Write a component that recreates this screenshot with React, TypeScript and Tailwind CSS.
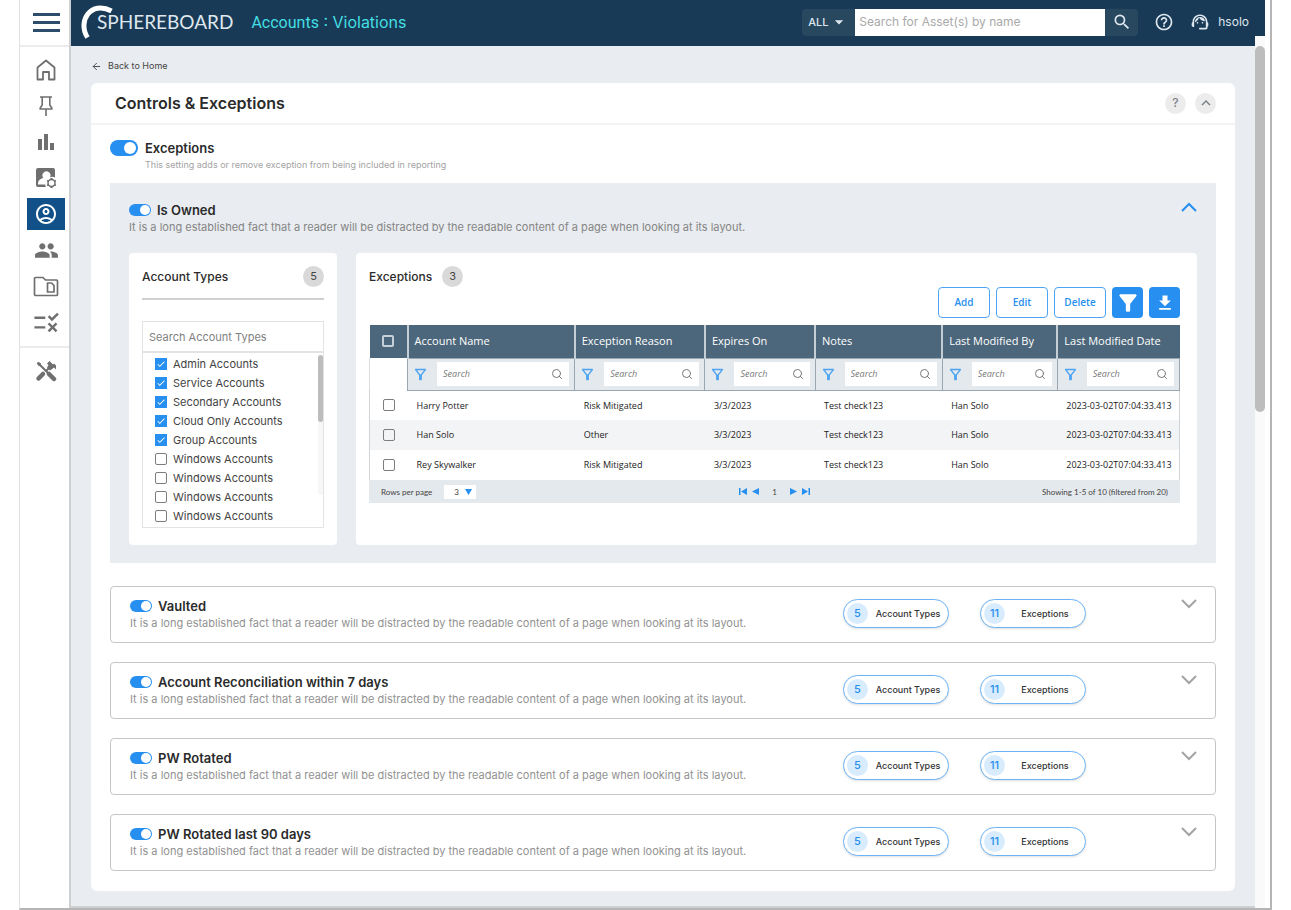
// src/App.tsx
import type { ReactNode } from 'react';
import { ArrowLeft, Search } from 'lucide-react';
import {
  MdArrowDropDown,
  MdCheck,
  MdExpandLess,
  MdFileDownload,
  MdFilterAlt,
  MdHelpOutline,
  MdOutlineAccountCircle,
  MdOutlineFilterAlt,
  MdPeople,
  MdRule,
  MdSearch,
  MdSupportAgent,
} from 'react-icons/md';

const DESCRIPTION =
  'It is a long established fact that a reader will be distracted by the readable content of a page when looking at its layout.';

const accountTypes = [
  { name: 'Admin Accounts', checked: true },
  { name: 'Service Accounts', checked: true },
  { name: 'Secondary Accounts', checked: true },
  { name: 'Cloud Only Accounts', checked: true },
  { name: 'Group Accounts', checked: true },
  { name: 'Windows Accounts', checked: false },
  { name: 'Windows Accounts', checked: false },
  { name: 'Windows Accounts', checked: false },
  { name: 'Windows Accounts', checked: false },
];

const columns = [
  { title: 'Account Name', width: 'w-[167px]' },
  { title: 'Exception Reason', width: 'w-[130px]' },
  { title: 'Expires On', width: 'w-[110px]' },
  { title: 'Notes', width: 'w-[127px]' },
  { title: 'Last Modified By', width: 'w-[115px]' },
  { title: 'Last Modified Date', width: 'w-[122px]' },
];

const rows = [
  ['Harry Potter', 'Risk Mitigated', '3/3/2023', 'Test check123', 'Han Solo', '2023-03-02T07:04:33.413'],
  ['Han Solo', 'Other', '3/3/2023', 'Test check123', 'Han Solo', '2023-03-02T07:04:33.413'],
  ['Rey Skywalker', 'Risk Mitigated', '3/3/2023', 'Test check123', 'Han Solo', '2023-03-02T07:04:33.413'],
];

const controls = ['Vaulted', 'Account Reconciliation within 7 days', 'PW Rotated', 'PW Rotated last 90 days'];

const HomeIcon = () => (
  <svg width="20" height="22" viewBox="0 0 20 22" fill="none" stroke="currentColor" strokeWidth="1.8" strokeLinejoin="round">
    <path d="M1.500 8.500 10 1.500l8.500 7V20.500H13v-7.500H7v7.500H1.500z" />
  </svg>
);

const PinIcon = () => (
  <svg width="16" height="22" viewBox="0 0 16 22" fill="none" stroke="currentColor" strokeWidth="1.6">
    <path d="M2 2h12M4.200 2v8L2.200 13v1h11.600v-1l-2-3V2M8 14v7" />
  </svg>
);

const BarsIcon = () => (
  <svg width="18" height="18" viewBox="0 0 18 18" fill="currentColor">
    <path d="M1 6h4v11H1zM7 1h4v16H7zM13 10h4v7h-4z" />
  </svg>
);

const AccountSettingsIcon = () => (
  <svg width="22" height="22" viewBox="0 0 22 22" fill="none">
    <path
      d="M3 1h15a2 2 0 0 1 2 2v7.500a5.500 5.500 0 0 0-5-.2 4 4 0 1 0-6.800.4C5.500 11.800 3 13.300 3 16v1.500h7.200c0 1 .3 1.800.8 2.500H3a2 2 0 0 1-2-2V3a2 2 0 0 1 2-2z"
      fill="currentColor"
    />
    <path d="M16.500 11v10M12.200 13.500l8.600 5M20.800 13.500l-8.600 5" stroke="currentColor" strokeWidth="2" />
    <circle cx="16.500" cy="16" r="3.500" fill="white" stroke="currentColor" strokeWidth="1.500" />
  </svg>
);

const FolderIcon = () => (
  <svg width="26" height="21" viewBox="0 0 26 21" fill="none" stroke="currentColor" strokeWidth="1.700" strokeLinejoin="round">
    <path d="M2.500 1.500H10l2.500 2.500h11a1 1 0 0 1 1 1v13.500a1 1 0 0 1-1 1h-21a1 1 0 0 1-1-1v-16a1 1 0 0 1 1-1z" />
    <path d="M14.500 7h4l2.500 2.500V16h-6.500z" />
  </svg>
);

// Screwdriver crossed with a hammer
const ToolsIcon = () => (
  <svg width="22" height="22" viewBox="0 0 22 22" fill="none" stroke="currentColor">
    <path d="M2.500 2.500l2 2M4 4l9.500 9.500" strokeWidth="2" />
    <path d="M2 3.500 3.500 2 6 3.500V5H6L3.500 6z" fill="currentColor" stroke="none" />
    <path d="M14 14l5 5" strokeWidth="4.500" strokeLinecap="round" />
    <path d="M10.500 11.500 14 8" strokeWidth="2" />
    <path d="M3.500 18.500 8 14" strokeWidth="4.500" strokeLinecap="round" />
    <path d="M12 3.500 14.500 1l3.500 3.500 1-1L21 5.500v4l-2-2-4 3-3-3 1.500-2.500z" fill="currentColor" stroke="none" />
  </svg>
);

const navLinks = [
  { title: 'Home', icon: <HomeIcon /> },
  { title: 'Pinned', icon: <PinIcon /> },
  { title: 'Reports', icon: <BarsIcon /> },
  { title: 'Account settings', icon: <AccountSettingsIcon /> },
  { title: 'Accounts', icon: <MdOutlineAccountCircle size={24} />, active: true },
  { title: 'Groups', icon: <MdPeople size={25} /> },
  { title: 'Folders', icon: <FolderIcon /> },
  { title: 'Rules', icon: <MdRule size={29} /> },
];

const Sidebar = () => (
  <aside className="flex w-[51px] shrink-0 flex-col border-r-2 border-[#cdcfd3] bg-white text-[#6f6f6f]">
    <div className="flex h-[47px] items-center justify-center border-b-2 border-[#ececec] pl-[3px]">
      <button aria-label="Menu" className="flex flex-col gap-[5px]">
        <span className="h-[3px] w-[27px] bg-[#2b4d6b]" />
        <span className="h-[3px] w-[27px] bg-[#2b4d6b]" />
        <span className="h-[3px] w-[27px] bg-[#2b4d6b]" />
      </button>
    </div>
    <nav className="flex flex-col items-center gap-1 border-b-2 border-[#ececec] pt-[7px] pb-2 pl-[3px]">
      {navLinks.map((link) => (
        <a
          key={link.title}
          href="#"
          aria-label={link.title}
          className={
            link.active
              ? 'flex h-8 w-[38px] items-center justify-center bg-[#115088] text-white'
              : 'flex h-8 w-[38px] items-center justify-center'
          }
        >
          {link.icon}
        </a>
      ))}
    </nav>
    <a href="#" aria-label="Tools" className="flex justify-center pt-3 pl-[3px]">
      <ToolsIcon />
    </a>
  </aside>
);

const Logo = () => (
  <div className="flex items-center">
    <svg width="34" height="36" viewBox="0 0 34 36" fill="none" className="-mr-[17px]">
      <path d="M7.500 33.500C-3 17 11-4 31.500 7" stroke="white" strokeWidth="5" />
    </svg>
    <span className="font-[Lato,sans-serif] text-[19px] text-[#dfe7ee]">SPHEREBOARD</span>
  </div>
);

const Header = () => (
  <header className="flex h-[46px] items-center bg-[#193a56] pr-4 pb-[2px] pl-[9px] text-[#dfe7ee]">
    <Logo />
    <h1 className="ml-[18px] text-base text-[#43dfe3]">
      <span className="font-[Roboto,sans-serif]">Accounts</span> : Violations
    </h1>
    <div className="ml-auto flex h-[27px] items-stretch">
      <div className="grid w-[53px] items-center rounded-l bg-[#27485f]">
        <select
          aria-label="Asset type"
          className="col-start-1 row-start-1 h-full w-full appearance-none pl-[6px] text-[11px] font-medium"
        >
          <option>ALL</option>
        </select>
        <MdArrowDropDown size={20} className="pointer-events-none col-start-1 row-start-1 mr-[6px] justify-self-end" />
      </div>
      <input
        aria-label="Search for assets"
        placeholder="Search for Asset(s) by name"
        className="w-[250px] bg-white px-1 text-xs text-gray-700 placeholder:text-[#a9a9a9]"
      />
      <button aria-label="Search" className="flex w-[33px] items-center justify-center rounded-r bg-[#27485f]">
        <MdSearch size={20} />
      </button>
    </div>
    <button aria-label="Help" className="ml-4">
      <MdHelpOutline size={20} />
    </button>
    <button aria-label="Support" className="ml-4">
      <MdSupportAgent size={20} />
    </button>
    <span className="ml-2 text-xs">hsolo</span>
  </header>
);

const Toggle = ({ id, large }: { id: string; large?: boolean }) => (
  <input
    id={id}
    type="checkbox"
    role="switch"
    defaultChecked
    className={
      large
        ? "flex h-4 w-7 shrink-0 appearance-none items-center justify-end rounded-full bg-[#268ff0] px-[2px] before:size-3 before:rounded-full before:bg-white before:content-['']"
        : "flex h-3 w-[22px] shrink-0 appearance-none items-center justify-end rounded-full bg-[#268ff0] px-px before:size-[10px] before:rounded-full before:bg-white before:content-['']"
    }
  />
);

const CheckBox = ({ id, label, checked, light }: { id: string; label?: string; checked?: boolean; light?: boolean }) => (
  <span className="inline-grid size-3 shrink-0 place-items-center">
    <input
      id={id}
      type="checkbox"
      aria-label={label}
      defaultChecked={checked}
      className={
        light
          ? 'col-start-1 row-start-1 size-3 appearance-none rounded-[2px] border-2 border-[#c6d0d8]'
          : 'col-start-1 row-start-1 size-3 appearance-none rounded-[2px] border border-[#7d7d7d] checked:rounded-none checked:border-[#268ff0] checked:bg-[#268ff0]'
      }
    />
    {checked && <MdCheck size={10} className="pointer-events-none col-start-1 row-start-1 text-white" />}
  </span>
);

const Chevron = ({ up }: { up?: boolean }) => (
  <svg
    width="16"
    height="10"
    viewBox="0 0 16 10"
    fill="none"
    strokeWidth="2"
    className={up ? 'stroke-[#268ff0]' : 'stroke-[#a3a3a3]'}
  >
    <path d={up ? 'M1 9l7-7 7 7' : 'M1 1l7 7 7-7'} />
  </svg>
);

const CountBadge = ({ children }: { children: ReactNode }) => (
  <span className="flex size-[21px] items-center justify-center rounded-full bg-[#d9d9d9] text-[11px] text-[#444]">
    {children}
  </span>
);

const AccountTypes = () => (
  <section className="w-[208px] shrink-0 rounded-sm bg-white px-[13px] pt-[13px] pb-[17px]">
    <div className="flex h-[34px] items-start justify-between border-b-2 border-[#d0d0d0]">
      <h3 className="pt-[3px] text-xs leading-4 font-medium">Account Types</h3>
      <CountBadge>5</CountBadge>
    </div>
    <div className="mt-[21px] border border-[#e3e3e3]">
      <input
        aria-label="Search Account Types"
        placeholder="Search Account Types"
        className="block h-[31px] w-full border-b-2 border-[#e3e3e3] px-[6px] text-[11px] placeholder:text-[#7f7f7f]"
      />
      <div className="flex justify-between">
        <ul className="grid gap-[3px] py-[3px] pl-3">
          {accountTypes.map((type, index) => (
            <li key={index} className="flex h-4 items-center gap-[6px]">
              <CheckBox id={`type-${index}`} checked={type.checked} />
              <label htmlFor={`type-${index}`} className="text-[11px] text-[#444]">
                {type.name}
              </label>
            </li>
          ))}
        </ul>
        <div className="mt-[2px] mb-8 w-[5px] rounded bg-[#f7f7f7]">
          <div className="h-[67px] rounded bg-[#bdbdbd]" />
        </div>
      </div>
    </div>
  </section>
);

const ExceptionsTable = () => (
  <table className="w-full table-fixed border-collapse font-['Open_Sans',sans-serif]">
    <colgroup>
      <col className="w-[38px]" />
      {columns.map((column) => (
        <col key={column.title} className={column.width} />
      ))}
    </colgroup>
    <thead>
      <tr className="h-[33px] bg-[#4c677b] text-left text-[11px] text-white">
        <th className="text-center leading-none">
          <CheckBox id="all-rows" label="Select all" light />
        </th>
        {columns.map((column) => (
          <th key={column.title} className="border-l-2 border-[#c5ced5] pl-[6px] font-medium whitespace-nowrap">
            {column.title}
          </th>
        ))}
      </tr>
      <tr className="h-8">
        <td className="border-l border-[#d9dee2]" />
        {columns.map((column) => (
          <td key={column.title} className="border border-[#9aa7b1] bg-[#e4e9ed]">
            <div className="flex items-center gap-2 pr-[5px] pl-1">
              <MdOutlineFilterAlt size={17} className="shrink-0 text-[#4da4f4]" />
              <label className="flex h-6 min-w-0 flex-1 items-center bg-white px-[6px]">
                <input
                  aria-label={`Search ${column.title}`}
                  placeholder="Search"
                  className="w-0 min-w-0 flex-1 text-[9px] placeholder:text-[#777] placeholder:italic"
                />
                <Search size={12} className="shrink-0 text-[#777]" />
              </label>
            </div>
          </td>
        ))}
      </tr>
    </thead>
    <tbody className="border-x border-[#cfd4d8]">
      {rows.map((row, index) => (
        <tr key={index} className="h-[30px] text-[9px] even:bg-[#f3f4f6]">
          <td className="text-center leading-none">
            <CheckBox id={`row-${index}`} label={`Select ${row[0]}`} />
          </td>
          {row.map((cell, cellIndex) => (
            <td key={cellIndex} className="pl-[9px] whitespace-nowrap text-[#222]">
              {cell}
            </td>
          ))}
        </tr>
      ))}
    </tbody>
  </table>
);

const Pagination = () => (
  <div className="grid h-[23px] grid-cols-3 items-center bg-[#e4e9ed] px-3 font-[Lato,sans-serif] text-[8px] text-[#444]">
    <div className="flex items-center gap-3">
      <label htmlFor="page-size">Rows per page</label>
      <div className="grid w-8 items-center bg-white">
        <select id="page-size" className="col-start-1 row-start-1 h-[14px] appearance-none pl-[10px] text-[8px]">
          <option>3</option>
        </select>
        <svg width="7" height="6" viewBox="0 0 7 6" className="pointer-events-none col-start-1 row-start-1 mr-1 justify-self-end fill-[#268ff0]">
          <path d="M0 0h7L3.500 6z" />
        </svg>
      </div>
    </div>
    <div className="flex items-center justify-center gap-[5px] text-[#268ff0]">
      <button aria-label="First page">
        <svg width="8" height="7" viewBox="0 0 8 7" fill="currentColor">
          <path d="M0 0h1.500v7H0zM8 0v7L2 3.500z" />
        </svg>
      </button>
      <button aria-label="Previous page">
        <svg width="7" height="7" viewBox="0 0 7 7" fill="currentColor">
          <path d="M7 0v7L0 3.500z" />
        </svg>
      </button>
      <span className="px-2 text-[#444]">1</span>
      <button aria-label="Next page">
        <svg width="7" height="7" viewBox="0 0 7 7" fill="currentColor">
          <path d="M0 0v7l7-3.500z" />
        </svg>
      </button>
      <button aria-label="Last page">
        <svg width="8" height="7" viewBox="0 0 8 7" fill="currentColor">
          <path d="M0 0v7l6-3.500zM6.500 0H8v7H6.500z" />
        </svg>
      </button>
    </div>
    <span className="text-right">Showing 1-5 of 10 (filtered from 20)</span>
  </div>
);

const Exceptions = () => (
  <section className="min-w-0 flex-1 rounded-sm bg-white pt-[13px] pr-[17px] pl-[13px]">
    <div className="flex items-center gap-[10px]">
      <h3 className="text-xs leading-4 font-medium">Exceptions</h3>
      <CountBadge>3</CountBadge>
    </div>
    <div className="mb-[7px] flex justify-end gap-[6px] font-['Open_Sans',sans-serif] text-[10px] font-semibold text-[#268ff0]">
      {['Add', 'Edit', 'Delete'].map((action) => (
        <button key={action} className="h-[31px] w-[52px] rounded border border-[#4da4f4]">
          {action}
        </button>
      ))}
      <button aria-label="Filter" className="flex size-[31px] items-center justify-center rounded bg-[#268ff0] text-white">
        <MdFilterAlt size={26} />
      </button>
      <button aria-label="Download" className="flex size-[31px] items-center justify-center rounded bg-[#268ff0] text-white">
        <MdFileDownload size={20} />
      </button>
    </div>
    <ExceptionsTable />
    <Pagination />
  </section>
);

const CountPill = ({ count, label }: { count: number; label: string }) => (
  <button className="flex h-[29px] w-[106px] items-center rounded-full border border-[#6cb4f6] bg-white pl-[3px] shadow">
    <span className="flex size-[21px] items-center justify-center rounded-full bg-[#d9ecfd] text-[11px] font-medium text-[#268ff0]">
      {count}
    </span>
    <span className="flex-1 text-center text-[9px] font-medium whitespace-nowrap text-[#333]">{label}</span>
  </button>
);

const ControlRow = ({ title, index }: { title: string; index: number }) => (
  <section className="flex h-[57px] items-start rounded-sm border border-[#c6c6c6] pr-[18px] pl-[19px]">
    <div className="pt-[11px]">
      <div className="flex items-center gap-[6px]">
        <Toggle id={`control-${index}`} />
        <label htmlFor={`control-${index}`} className="text-[13px] leading-4 font-semibold">
          {title}
        </label>
      </div>
      <p className="text-[11px] leading-[18px] text-[#929292]">{DESCRIPTION}</p>
    </div>
    <div className="mt-3 ml-auto flex gap-[31px]">
      <CountPill count={5} label="Account Types" />
      <CountPill count={11} label="Exceptions" />
    </div>
    <button aria-label={`Expand ${title}`} className="mt-3 ml-[95px]">
      <Chevron />
    </button>
  </section>
);

const App = () => (
  <div className="mx-[19px] flex min-h-screen border-r-2 border-b-2 border-l border-l-[#e2e2e2] border-r-[#b5b5b5] border-b-[#b5b5b5] bg-white pr-[5px] font-[Inter,sans-serif] text-[#2b2b2b]">
    <Sidebar />
    <div className="flex min-w-0 flex-1 flex-col">
      <Header />
      <div className="flex flex-1">
        <main className="min-w-0 flex-1 border-b-2 border-[#cdcfd3] bg-[#e9ecf0] px-5 pt-[11px] pb-[15px]">
          <a href="#" className="flex h-[18px] items-center gap-[6px] text-[9px] text-[#444]">
            <ArrowLeft size={11} />
            Back to Home
          </a>
          <div className="mt-2 rounded-md bg-white pb-5">
            <div className="flex h-[42px] items-center border-b-2 border-[#f3f3f3] pr-[19px] pl-6">
              <h2 className="text-base font-semibold">Controls &amp; Exceptions</h2>
              <button aria-label="Help" className="ml-auto size-[21px] rounded-full bg-[#ececec] text-xs font-medium text-[#7a7f85]">
                ?
              </button>
              <button
                aria-label="Collapse"
                className="ml-[9px] flex size-[21px] items-center justify-center rounded-full bg-[#ececec] text-[#7a7f85]"
              >
                <MdExpandLess size={18} />
              </button>
            </div>
            <div className="px-[19px]">
              <div className="flex gap-[7px] pt-[15px]">
                <Toggle id="exceptions" large />
                <div>
                  <label htmlFor="exceptions" className="block text-[13px] leading-4 font-semibold">
                    Exceptions
                  </label>
                  <p className="text-[9px] leading-[18px] text-[#a3a3a3]">
                    This setting adds or remove exception from being included in reporting
                  </p>
                </div>
              </div>
              <section className="mt-[9px] bg-[#e9ecf0] px-[19px] pt-[19px] pb-[18px]">
                <div className="flex items-center gap-[6px]">
                  <Toggle id="is-owned" />
                  <label htmlFor="is-owned" className="text-[13px] leading-4 font-semibold">
                    Is Owned
                  </label>
                  <button aria-label="Collapse Is Owned" className="ml-auto self-start">
                    <Chevron up />
                  </button>
                </div>
                <p className="text-[11px] leading-[18px] text-[#858585]">{DESCRIPTION}</p>
                <div className="mt-[17px] flex gap-[19px]">
                  <AccountTypes />
                  <Exceptions />
                </div>
              </section>
              <div className="mt-[23px] flex flex-col gap-[19px]">
                {controls.map((title, index) => (
                  <ControlRow key={title} title={title} index={index} />
                ))}
              </div>
            </div>
          </div>
        </main>
        <div className="-mt-[10px] w-[10px] bg-[#fafafa] pt-[10px]">
          <div className="h-[366px] rounded-full bg-[#bdbdbd]" />
        </div>
      </div>
    </div>
  </div>
);

export default App;
